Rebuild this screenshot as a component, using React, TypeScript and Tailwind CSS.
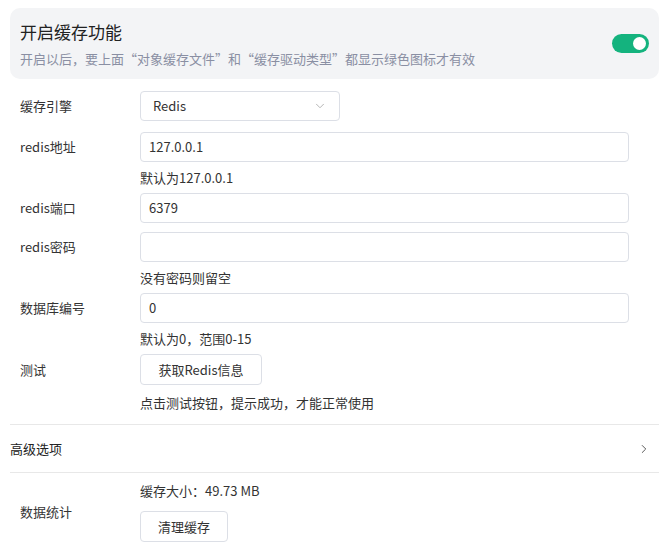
import { ChevronDown, ChevronRight } from 'lucide-react'

const font = { fontFamily: '"Noto Sans CJK SC", "Noto Sans", sans-serif' }

function Input({ value }: { value: string }) {
  return (
    <div className="w-[489px] h-[30px] border border-[#dcdfe6] rounded-[4px] px-[8px] flex items-center text-[13px] text-[#333]">
      {value}
    </div>
  )
}

function Row({ label, children, help }: { label: string; children: React.ReactNode; help?: string }) {
  return (
    <div className="flex">
      <div className="w-[130px] pl-[10px] h-[30px] flex items-center text-[13px] text-[#333]">{label}</div>
      <div className="flex flex-col">
        {children}
        {help && <div className="h-[31px] pt-[7px] text-[13px] text-[#333] leading-[17px]">{help}</div>}
      </div>
    </div>
  )
}

export default function App() {
  return (
    <div className="w-[669px] h-[555px] bg-white px-[10px] pt-[8px] overflow-hidden" style={font}>
      <div className="h-[71px] bg-[#f3f4f6] rounded-[10px] flex items-center justify-between pl-[10px] pr-[10px]">
        <div className="flex flex-col">
          <div className="text-[17px] text-[#222] leading-[24px]">开启缓存功能</div>
          <div className="text-[13px] text-[#8a8fa3] mt-[6px] leading-[18px]">开启以后，要上面“对象缓存文件”和“缓存驱动类型”都显示绿色图标才有效</div>
        </div>
        <div className="w-[37px] h-[19px] rounded-full bg-[#14b37e] flex items-center justify-end pr-[3px]">
          <div className="w-[13px] h-[13px] rounded-full bg-white" />
        </div>
      </div>
      <div className="flex flex-col gap-[11px] mt-[12px]">
        <Row label="缓存引擎">
          <div className="w-[200px] h-[30px] border border-[#dcdfe6] rounded-[4px] pl-[12px] pr-[12px] flex items-center justify-between text-[13px] text-[#333]">
            Redis
            <ChevronDown className="w-[14px] h-[14px] text-[#aaa]" strokeWidth={1.5} />
          </div>
        </Row>
        <div className="flex flex-col">
          <Row label="redis地址" help="默认为127.0.0.1"><Input value="127.0.0.1" /></Row>
          <Row label="redis端口"><Input value="6379" /></Row>
        </div>
        <div className="flex flex-col -mt-[2px]">
          <Row label="redis密码" help="没有密码则留空"><Input value="" /></Row>
          <Row label="数据库编号" help="默认为0，范围0-15"><Input value="0" /></Row>
        </div>
      </div>
      <div className="flex">
        <div className="w-[130px] pl-[10px] h-[31px] flex items-center text-[13px] text-[#333]">测试</div>
        <div className="flex flex-col">
          <div className="w-[122px] h-[31px] border border-[#dcdfe6] rounded-[4px] flex items-center justify-center text-[13px] text-[#333]">获取Redis信息</div>
          <div className="pt-[9px] text-[13px] text-[#333] leading-[17px]">点击测试按钮，提示成功，才能正常使用</div>
        </div>
      </div>
      <div className="border-t border-[#e8e8e8] mt-[13px] h-[48px] flex items-center justify-between text-[13px] text-[#222]">
        高级选项
        <ChevronRight className="w-[14px] h-[14px] text-[#444] mr-[8px]" strokeWidth={1.5} />
      </div>
      <div className="border-t border-[#e8e8e8] flex pt-[9px]">
        <div className="w-[130px] pl-[10px] flex items-center text-[13px] text-[#333]">数据统计</div>
        <div className="flex flex-col">
          <div className="text-[13px] text-[#333] leading-[17px]">缓存大小：49.73 MB</div>
          <div className="mt-[12px] w-[88px] h-[31px] border border-[#dcdfe6] rounded-[4px] flex items-center justify-center text-[13px] text-[#333]">清理缓存</div>
        </div>
      </div>
    </div>
  )
}
